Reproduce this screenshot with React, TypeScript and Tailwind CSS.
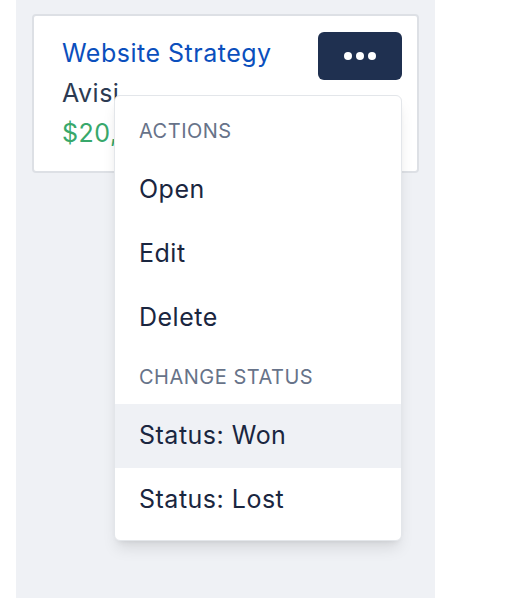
import { useState } from 'react';

const actions = ['Open', 'Edit', 'Delete'];
const statuses = ['Status: Won', 'Status: Lost'];

export default function App() {
  const [hovered, setHovered] = useState<string | null>('Status: Won');

  return (
    <div
      className="flex h-[598px] w-[512px] bg-white"
      style={{ fontFamily: 'Inter, "Liberation Sans", sans-serif' }}
    >
      <div className="ml-4 h-full w-[419px] bg-[#eff1f5] px-4 pt-[14px]">
        <div className="flex justify-between rounded-[4px] border-2 border-[#dde0e5] bg-white pb-[18px] pl-[28px] pr-[15px] pt-4">
          <div className="flex flex-col pt-px text-[25px] leading-[40px] tracking-[0.5px]">
            <span className="text-[#0b4fbd]">Website Strategy</span>
            <span className="text-[#2c3a52]">Avisi</span>
            <span className="text-[#38a86b]">$20,000</span>
          </div>

          <div className="relative">
            <button
              type="button"
              className="flex h-12 w-[84px] items-center justify-center gap-1 rounded-md bg-[#1f3050]"
            >
              <span className="h-2 w-2 rounded-full bg-white" />
              <span className="h-2 w-2 rounded-full bg-white" />
              <span className="h-2 w-2 rounded-full bg-white" />
            </button>

            <div className="absolute right-0 top-[63px] z-10 w-[288px] rounded-md border border-[#e3e6ea] bg-white py-2 shadow-lg">
              <div className="flex h-[54px] items-center px-6 text-[20px] uppercase tracking-[0.5px] text-[#677389]">
                Actions
              </div>
              {actions.map((item) => (
                <div
                  key={item}
                  onMouseEnter={() => setHovered(item)}
                  className={`flex h-16 items-center px-6 text-[25px] tracking-[0.5px] text-[#1a2640] ${
                    hovered === item ? 'bg-[#eff1f5]' : ''
                  }`}
                >
                  {item}
                </div>
              ))}
              <div className="flex h-[54px] items-center px-6 text-[20px] uppercase tracking-[0.5px] text-[#677389]">
                Change status
              </div>
              {statuses.map((item) => (
                <div
                  key={item}
                  onMouseEnter={() => setHovered(item)}
                  className={`flex h-16 items-center px-6 text-[25px] tracking-[0.5px] text-[#1a2640] ${
                    hovered === item ? 'bg-[#eff1f5]' : ''
                  }`}
                >
                  {item}
                </div>
              ))}
            </div>
          </div>
        </div>
      </div>
    </div>
  );
}
